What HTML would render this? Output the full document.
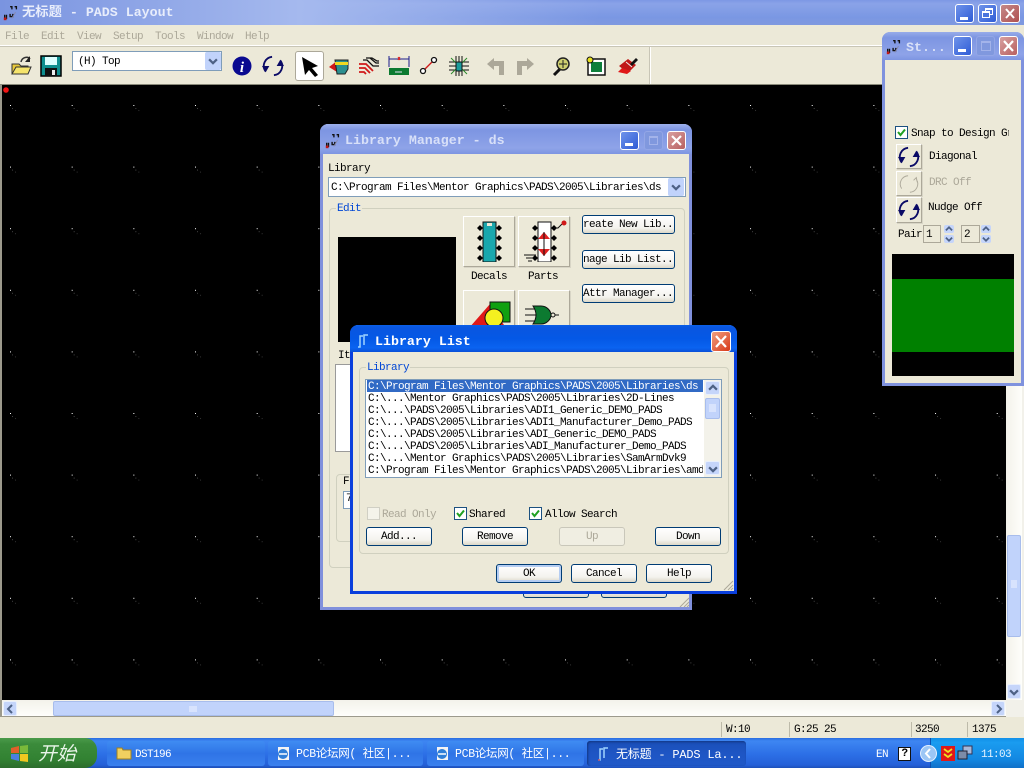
<!DOCTYPE html>
<html lang="zh"><head><meta charset="utf-8"><title>无标题 - PADS Layout</title>
<style>
html,body{margin:0;padding:0;width:1024px;height:768px;overflow:hidden;background:#ece9d8}
body{position:relative;font-family:"Liberation Mono","Noto Sans CJK SC",monospace;font-size:11px;letter-spacing:-.6px;color:#000}
div,svg,span.a{position:absolute;box-sizing:border-box}
.t{position:absolute;white-space:pre;line-height:12px;height:12px;margin-top:1px}
.h{margin-top:0}
.g{color:#aca899}
.blue{color:#0046d5}
.btn{position:absolute;height:19px;background:linear-gradient(#fff,#f4f3ee 70%,#dcd8c8);border:1px solid #003c74;border-radius:3px;text-align:center;line-height:19px;white-space:pre;overflow:hidden}
.dis{border-color:#c9c7ba;background:#f0eee2;color:#aca899}
.tb{border-radius:3px;border:1px solid #fff}
.min{background:linear-gradient(135deg,#6f93ea,#2f5cd6);}
.cls{background:linear-gradient(135deg,#e8907a,#c2452c);}
.group{position:absolute;border:1px solid #d0d0bf;border-radius:4px}
.icbtn{position:absolute;background:#ece9d8;border:1px solid;border-color:#fff #aca899 #aca899 #fff;box-shadow:1px 1px 0 #d8d5c6}
.chk{position:absolute;width:13px;height:13px;background:#fff;border:1px solid #1c5180}
.tsk{position:absolute;top:741px;height:25px;border-radius:3px;color:#fff;line-height:25px;white-space:pre;font-size:11px;background:linear-gradient(#3f8cf3,#2f74e6 50%,#3a80ee)}
</style></head>
<body>
<svg width="0" height="0" style="position:absolute">
<defs>
<symbol id="ref" viewBox="0 0 24 24"><path d="M11 2A10 10 0 0 0 4 18" fill="none" stroke="#0a0a66" stroke-width="2"/><path d="M13 22A10 10 0 0 0 20 6" fill="none" stroke="#0a0a66" stroke-width="2"/><path d="M0 12h8l-4 7zM24 12h-8l4-7z" fill="#0a0a66"/></symbol>
<symbol id="refg" viewBox="0 0 24 24"><path d="M11 3A9 9 0 0 0 4 17M13 21A9 9 0 0 0 20 7M17 8l3-3 1 5" fill="none" stroke="#aca899" stroke-width="1"/></symbol>
<symbol id="ck" viewBox="0 0 11 11"><path d="M2 5l2.500 3L9 2.500" fill="none" stroke="#21a121" stroke-width="2"/></symbol>
<symbol id="mini" viewBox="0 0 20 20"><path d="M9 3h2v3M14 3h2v3M3 12v4h2v-4M9 11v3h3v-3" fill="none" stroke="#111" stroke-width="1.500"/><path d="M2 15h3v3H2z" fill="#c01818"/><path d="M15 9l-4 7" stroke="#88a" stroke-width="1"/></symbol>
<symbol id="up" viewBox="0 0 9 9"><path d="M1 6l3.500-3.500L8 6" fill="none" stroke="#4d6185" stroke-width="2"/></symbol>
<symbol id="dn" viewBox="0 0 9 9"><path d="M1 3l3.500 3.500L8 3" fill="none" stroke="#4d6185" stroke-width="2"/></symbol>
<pattern id="grid" x="10" y="105" width="61.67" height="61.6" patternUnits="userSpaceOnUse"><rect width="1" height="1" fill="#fff"/><rect x="2" y="3" width="1" height="1" fill="#444"/><rect x="5" y="5" width="1" height="1" fill="#333"/></pattern>
</defs>
</svg>

<!-- main title -->
<div style="left:0;top:0;width:1024px;height:25px;background:linear-gradient(#7d98e4,#8aa3e8 15%,#7a97e3 70%,#7f99e0)"></div>
<div style="left:0;top:0;width:600px;height:25px;background:linear-gradient(90deg,#7a94e0,#a5b9ee 50%,#a5b9ee00)"></div>
<svg style="left:2px;top:4px" width="18" height="18"><use href="#mini"/></svg>
<span class="t h" style="left:22px;top:5px;line-height:15px;height:15px;font-size:13.3px;letter-spacing:0;font-weight:bold;color:#e8edfb">无标题 - PADS Layout</span>
<div class="tb min" style="left:955px;top:4px;width:19px;height:19px"><div style="left:4px;top:12px;width:8px;height:3px;background:#fff"></div></div>
<div class="tb min" style="left:978px;top:4px;width:19px;height:19px"><div style="left:6px;top:3px;width:8px;height:7px;border:1px solid #fff;border-top-width:2px"></div><div style="left:3px;top:6px;width:8px;height:7px;border:1px solid #fff;border-top-width:2px;background:#4a74dd"></div></div>
<div class="tb cls" style="left:1000px;top:4px;width:20px;height:19px;background:linear-gradient(135deg,#c58a8a,#b05050)"><svg width="18" height="17"><path d="M5 4l8 9M13 4l-8 9" stroke="#fff" stroke-width="2"/></svg></div>

<!-- menu -->
<div style="left:0;top:25px;width:1024px;height:21px;background:#ece9d8;border-bottom:1px solid #fff"></div>
<span class="t g" style="left:5px;top:30px">File</span>
<span class="t g" style="left:41px;top:30px">Edit</span>
<span class="t g" style="left:77px;top:30px">View</span>
<span class="t g" style="left:113px;top:30px">Setup</span>
<span class="t g" style="left:155px;top:30px">Tools</span>
<span class="t g" style="left:197px;top:30px">Window</span>
<span class="t g" style="left:245px;top:30px">Help</span>
<div style="left:0;top:46px;width:1024px;height:1px;background:#c8c5b6"></div>

<!-- toolbar -->
<svg style="left:10px;top:55px" width="24" height="22"><path d="M2 9h7l2 2h7v8H2z" fill="#e8c93a" stroke="#333"/><path d="M2 19l4-7h15l-3 7z" fill="#f5e46c" stroke="#333"/><path d="M11 7C12 2 18 1 20 4" fill="none" stroke="#333" stroke-width="1.500"/><path d="M20 1v6h-5z" fill="#222"/></svg>
<svg style="left:40px;top:55px" width="22" height="22"><rect x="1" y="1" width="20" height="20" fill="#0f8f8f" stroke="#000" stroke-width="1.500"/><rect x="5" y="2" width="12" height="8" fill="#dff"/><rect x="5" y="13" width="12" height="8" fill="#111"/><rect x="12" y="15" width="3" height="5" fill="#eee"/></svg>
<div style="left:72px;top:51px;width:150px;height:20px;background:#fff;border:1px solid #7f9db9"></div>
<span class="t" style="left:78px;top:55px">(H) Top</span>
<div style="left:205px;top:52px;width:16px;height:18px;background:#c1d3fb;border-radius:2px"><svg style="left:3px;top:4px" width="10" height="10"><use href="#dn"/></svg></div>
<svg style="left:232px;top:56px" width="20" height="20"><circle cx="10" cy="10" r="9.500" fill="#0a0a90"/><text x="10" y="16" text-anchor="middle" fill="#fff" font-family="Liberation Serif" font-style="italic" font-weight="bold" font-size="15" letter-spacing="0">i</text></svg>
<svg style="left:262px;top:55px" width="22" height="22"><use href="#ref"/></svg>
<div style="left:295px;top:51px;width:29px;height:30px;background:#fff;border:1px solid #aca899;border-radius:3px"><svg width="27" height="28"><path d="M6 5l16 9-6 2 6 7-3 2-6-7-4 5z" fill="#000"/></svg></div>
<svg style="left:328px;top:56px" width="22" height="20"><path d="M1 11l8-6v11z" fill="#d01818"/><path d="M7 4h13v9l-3 5H9z" fill="#2b8f8f" stroke="#222"/><path d="M7 6h13v3H7z" fill="#f0d820"/></svg>
<svg style="left:358px;top:56px" width="22" height="20"><path d="M1 8h7l7 7M1 12h6l5 5M1 16h5l2 2" fill="none" stroke="#d01818" stroke-width="1.800"/><path d="M8 2h4l6 5h3M12 2h2l5 3h2M5 4h4l6 6h6" fill="none" stroke="#111" stroke-width="1.300"/></svg>
<svg style="left:387px;top:55px" width="24" height="22"><path d="M2 1v11M22 1v11M2 4h20" stroke="#1a1a8a" fill="none"/><path d="M11 2l2 3M13 2l-2 3" stroke="#e01010"/><rect x="2" y="13" width="20" height="7" fill="#0c7a30"/><path d="M8 17h7" stroke="#dde" /></svg>
<svg style="left:419px;top:56px" width="20" height="20"><path d="M4 15L15 4" stroke="#d01818" stroke-width="1.300"/><circle cx="4" cy="15" r="2.500" fill="#fff" stroke="#111" stroke-width="1.300"/><circle cx="15" cy="4" r="2.500" fill="#fff" stroke="#111" stroke-width="1.300"/></svg>
<svg style="left:448px;top:55px" width="22" height="22"><path d="M8 1v20M11 1v20M14 1v20M1 7h20M1 11h20M1 15h20" stroke="#111"/><path d="M3 3l16 16M19 3L3 19" stroke="#2a8a2a"/><rect x="8" y="7" width="6" height="9" fill="#1b9c9c" stroke="#111"/></svg>
<svg style="left:486px;top:56px" width="20" height="20"><path d="M8 2L1 8l7 6v-4h5v9h5V5H8z" fill="#aca899"/></svg>
<svg style="left:515px;top:56px" width="20" height="20"><path d="M12 2l7 6-7 6v-4H7v9H2V5h10z" fill="#aca899"/></svg>
<svg style="left:551px;top:56px" width="21" height="21"><path d="M9 13l-6 6" stroke="#111" stroke-width="3"/><circle cx="12" cy="8" r="6" fill="#cfd070" stroke="#222" stroke-width="1.500"/><path d="M12 4v8M8 8h8" stroke="#222"/></svg>
<svg style="left:586px;top:56px" width="21" height="20"><rect x="2" y="3" width="17" height="16" fill="#fff" stroke="#111" stroke-width="1.500"/><rect x="5" y="6" width="11" height="10" fill="#0d7f3b"/><circle cx="4" cy="4" r="3" fill="#e8e020" stroke="#111"/></svg>
<svg style="left:617px;top:55px" width="22" height="22"><path d="M2 11l9-7 8 6-8 8z" fill="#c01818"/><path d="M1 17l9 2 4-3-9-3z" fill="#e01818"/><path d="M13 9l6-6 2 2-6 6z" fill="#111"/><path d="M9 7l6 5" stroke="#eee"/></svg>
<div style="left:649px;top:47px;width:2px;height:37px;border-left:1px solid #c8c5b6;border-right:1px solid #fff"></div>

<!-- canvas -->
<div style="left:0;top:84px;width:1024px;height:633px;background:#f2f1ea;border-top:1px solid #8a8a7a"></div>
<div style="left:0;top:85px;width:2px;height:632px;background:#9c9a8c"></div>
<svg style="left:2px;top:85px" width="1004" height="615" viewBox="2 85 1004 615"><rect x="2" y="85" width="1004" height="615" fill="#000"/><rect x="2" y="85" width="1004" height="615" fill="url(#grid)"/><circle cx="6" cy="90" r="2.800" fill="#f01414"/></svg>

<!-- scrollbars -->
<div style="left:1006px;top:85px;width:16px;height:615px;background:linear-gradient(90deg,#f3f2ea,#fefefb)"></div>
<div style="left:1007px;top:535px;width:14px;height:102px;background:#c1d3fb;border:1px solid #a8bdec;border-radius:2px"><svg style="left:2px;top:44px" width="8" height="9"><path d="M1 1h6M1 3h6M1 5h6M1 7h6" stroke="#eef3ff"/></svg></div>
<div style="left:1007px;top:684px;width:14px;height:15px;background:#c5d5fa;border:1px solid #e8effc;border-radius:2px"><svg style="left:1px;top:2px" width="10" height="10"><use href="#dn"/></svg></div>
<div style="left:2px;top:700px;width:1004px;height:17px;background:linear-gradient(#f3f2ea,#fefefb);border-bottom:1px solid #9c9a8c"></div>
<div style="left:3px;top:701px;width:14px;height:15px;background:#c5d5fa;border:1px solid #e8effc;border-radius:2px"><svg style="left:2px;top:2px" width="9" height="10"><path d="M6 1L2 5l4 4" fill="none" stroke="#4d6185" stroke-width="2"/></svg></div>
<div style="left:53px;top:701px;width:281px;height:15px;background:#c1d3fb;border:1px solid #a8bdec;border-radius:2px"><svg style="left:135px;top:3px" width="8" height="8"><path d="M1 1v6M3 1v6M5 1v6M7 1v6" stroke="#eef3ff"/></svg></div>
<div style="left:991px;top:701px;width:14px;height:15px;background:#c5d5fa;border:1px solid #e8effc;border-radius:2px"><svg style="left:3px;top:2px" width="9" height="10"><path d="M2 1l4 4-4 4" fill="none" stroke="#4d6185" stroke-width="2"/></svg></div>

<!-- status -->
<div style="left:0;top:717px;width:1024px;height:21px;background:#ece9d8"></div>
<div style="left:721px;top:722px;width:1px;height:15px;background:#bdbaa9"></div>
<div style="left:789px;top:722px;width:1px;height:15px;background:#bdbaa9"></div>
<div style="left:911px;top:722px;width:1px;height:15px;background:#bdbaa9"></div>
<div style="left:967px;top:722px;width:1px;height:15px;background:#bdbaa9"></div>
<span class="t" style="left:726px;top:723px">W:10</span>
<span class="t" style="left:794px;top:723px">G:25 25</span>
<span class="t" style="left:915px;top:723px">3250</span>
<span class="t" style="left:972px;top:723px">1375</span>

<!-- St window -->
<div style="left:882px;top:32px;width:142px;height:354px;background:#ece9d8;border:3px solid #7f92de;border-top:0;border-radius:8px 8px 0 0"></div>
<div style="left:882px;top:32px;width:142px;height:28px;background:linear-gradient(#98ace9,#7d95e2 20%,#8ea3e8 80%,#7d95e2);border-radius:8px 8px 0 0"></div>
<svg style="left:885px;top:38px" width="18" height="18"><use href="#mini"/></svg>
<span class="t h" style="left:906px;top:40px;height:15px;line-height:15px;font-size:13.3px;letter-spacing:0;font-weight:bold;color:#d8e0f8">St...</span>
<div class="tb min" style="left:953px;top:36px;width:19px;height:20px"><div style="left:4px;top:12px;width:8px;height:3px;background:#fff"></div></div>
<div class="tb" style="left:976px;top:36px;width:19px;height:20px;background:#8098de;border-color:#93a6e6"><div style="left:4px;top:4px;width:10px;height:10px;border:1px solid #a3b3ea;border-top-width:2px"></div></div>
<div class="tb" style="left:999px;top:36px;width:19px;height:20px;background:linear-gradient(135deg,#d8a0a0,#b86060)"><svg width="17" height="18"><path d="M4 4l9 10M13 4L4 14" stroke="#fff" stroke-width="2.200"/></svg></div>
<div class="chk" style="left:895px;top:126px"><svg width="11" height="11"><use href="#ck"/></svg></div>
<div style="left:911px;top:127px;width:98px;height:14px;overflow:hidden"><span class="t" style="left:0;top:0">Snap to Design Grid</span></div>
<div class="icbtn" style="left:896px;top:144px;width:26px;height:25px"><svg style="left:1px;top:1px" width="22" height="22"><use href="#ref"/></svg></div>
<div class="icbtn" style="left:896px;top:171px;width:26px;height:25px"><svg style="left:1px;top:1px" width="22" height="22"><use href="#refg"/></svg></div>
<div class="icbtn" style="left:896px;top:197px;width:26px;height:26px"><svg style="left:1px;top:1px" width="22" height="22"><use href="#ref"/></svg></div>
<span class="t" style="left:929px;top:150px">Diagonal</span>
<span class="t g" style="left:929px;top:176px">DRC Off</span>
<span class="t" style="left:928px;top:201px">Nudge Off</span>
<span class="t" style="left:898px;top:228px">Pair</span>
<div style="left:923px;top:225px;width:18px;height:18px;background:#ece9d8;border:1px solid #aca899;padding-left:2px;line-height:18px">1</div>
<div style="left:961px;top:225px;width:19px;height:18px;background:#ece9d8;border:1px solid #aca899;padding-left:2px;line-height:18px">2</div>
<div style="left:944px;top:225px;width:10px;height:8px;background:#c5d5fa;border-radius:2px"><svg width="10" height="8" viewBox="0 0 9 9"><use href="#up"/></svg></div>
<div style="left:944px;top:235px;width:10px;height:8px;background:#c5d5fa;border-radius:2px"><svg width="10" height="8" viewBox="0 0 9 9"><use href="#dn"/></svg></div>
<div style="left:981px;top:225px;width:10px;height:8px;background:#c5d5fa;border-radius:2px"><svg width="10" height="8" viewBox="0 0 9 9"><use href="#up"/></svg></div>
<div style="left:981px;top:235px;width:10px;height:8px;background:#c5d5fa;border-radius:2px"><svg width="10" height="8" viewBox="0 0 9 9"><use href="#dn"/></svg></div>
<div style="left:892px;top:254px;width:122px;height:122px;background:#000"></div>
<div style="left:892px;top:279px;width:122px;height:73px;background:#008000"></div>

<!-- Library Manager -->
<div style="left:320px;top:124px;width:372px;height:486px;background:#ece9d8;border:3px solid #8090dc;border-top:0;border-radius:8px 8px 0 0"></div>
<div style="left:320px;top:124px;width:372px;height:30px;background:linear-gradient(#9db0ec,#7d95e2 20%,#8ea3e8 80%,#7d95e2);border-radius:8px 8px 0 0"></div>
<svg style="left:324px;top:132px" width="18" height="18"><use href="#mini"/></svg>
<span class="t h" style="left:345px;top:133px;height:15px;line-height:15px;font-size:13.3px;letter-spacing:0;font-weight:bold;color:#d8e0f8">Library Manager - ds</span>
<div class="tb min" style="left:620px;top:131px;width:19px;height:19px"><div style="left:4px;top:11px;width:8px;height:3px;background:#fff"></div></div>
<div class="tb" style="left:644px;top:131px;width:19px;height:19px;background:#8098de;border-color:#93a6e6"><div style="left:4px;top:4px;width:9px;height:9px;border:1px solid #a3b3ea;border-top-width:2px"></div></div>
<div class="tb" style="left:667px;top:131px;width:19px;height:19px;background:linear-gradient(135deg,#d8a0a0,#b86060)"><svg width="17" height="17"><path d="M4 4l9 9M13 4l-9 9" stroke="#fff" stroke-width="2.200"/></svg></div>
<span class="t" style="left:328px;top:162px">Library</span>
<div style="left:328px;top:177px;width:358px;height:20px;background:#fff;border:1px solid #7f9db9"></div>
<span class="t" style="left:331px;top:181px">C:\Program Files\Mentor Graphics\PADS\2005\Libraries\ds</span>
<div style="left:668px;top:178px;width:16px;height:18px;background:#c1d3fb;border-radius:2px"><svg style="left:3px;top:4px" width="10" height="10"><use href="#dn"/></svg></div>
<div class="group" style="left:329px;top:208px;width:356px;height:360px"></div>
<span class="t blue" style="left:336px;top:202px;background:#ece9d8;padding:0 1px">Edit</span>
<div style="left:338px;top:237px;width:118px;height:105px;background:#000"></div>
<div class="icbtn" style="left:463px;top:216px;width:52px;height:51px"><svg style="left:10px;top:3px" width="30" height="42"><rect x="9" y="2" width="13" height="40" fill="#19a7ad" stroke="#111"/><path d="M13 3h5l0 3h-5z" fill="#ece9d8"/><path d="M3 8l3-3 3 3-3 3zM3 18l3-3 3 3-3 3zM3 28l3-3 3 3-3 3zM3 38l3-3 3 3-3 3zM22 8l3-3 3 3-3 3zM22 18l3-3 3 3-3 3zM22 28l3-3 3 3-3 3zM22 38l3-3 3 3-3 3z" fill="#000"/></svg></div>
<div class="icbtn" style="left:518px;top:216px;width:52px;height:51px"><svg style="left:3px;top:3px" width="46" height="42"><rect x="16" y="2" width="13" height="40" fill="#fff" stroke="#111"/><path d="M22 12l6 7H16z" fill="#e02020"/><path d="M22 36l6-7H16z" fill="#e02020"/><path d="M22 12v24" stroke="#111"/><path d="M10 8l3-3 3 3-3 3zM10 18l3-3 3 3-3 3zM10 28l3-3 3 3-3 3zM10 38l3-3 3 3-3 3zM29 8l3-3 3 3-3 3zM29 18l3-3 3 3-3 3zM29 28l3-3 3 3-3 3zM29 38l3-3 3 3-3 3z" fill="#000"/><path d="M2 35h12M4 38h8M6 41h4M32 8h4l4-4" stroke="#111" fill="none"/><circle cx="42" cy="3" r="2.500" fill="#d01818"/></svg></div>
<span class="t" style="left:471px;top:270px">Decals</span>
<span class="t" style="left:528px;top:270px">Parts</span>
<div class="btn" style="left:582px;top:215px;width:93px;text-align:left">reate New Lib..</div>
<div class="btn" style="left:582px;top:250px;width:93px;text-align:left">nage Lib List..</div>
<div class="btn" style="left:582px;top:284px;width:93px;text-align:left">Attr Manager...</div>
<div class="icbtn" style="left:463px;top:290px;width:52px;height:50px"><svg style="left:4px;top:3px" width="44" height="44"><path d="M1 34L22 10l16 24z" fill="#e01818"/><rect x="22" y="8" width="20" height="20" fill="#10a010" stroke="#111"/><circle cx="26" cy="24" r="9" fill="#f4f020" stroke="#111"/></svg></div>
<div class="icbtn" style="left:518px;top:290px;width:52px;height:50px"><svg style="left:4px;top:12px" width="40" height="24"><path d="M2 6h12M2 12h12M2 18h12M28 12h8" stroke="#111" fill="none"/><path d="M10 3h8c6 0 10 5 10 9 0 4-4 9-10 9h-8c4-6 4-12 0-18z" fill="#0c7a30" stroke="#111"/><circle cx="30" cy="12" r="2" fill="#ece9d8" stroke="#111"/></svg></div>
<span class="t" style="left:338px;top:349px">It</span>
<div style="left:335px;top:364px;width:30px;height:88px;background:#fff;border:1px solid #9a9a9a"></div>
<div class="group" style="left:336px;top:474px;width:30px;height:68px"></div>
<span class="t" style="left:343px;top:475px;background:#ece9d8">F</span>
<div style="left:343px;top:491px;width:20px;height:18px;background:#fff;border:1px solid #7f9db9;padding-left:2px;line-height:15px">7</div>
<div class="btn" style="left:523px;top:580px;width:66px;height:18px"></div>
<div class="btn" style="left:601px;top:580px;width:66px;height:18px"></div>
<svg style="left:678px;top:596px" width="12" height="12"><path d="M2 11l9-9M6 11l5-5M9 11l2-2" stroke="#aca899"/></svg>

<!-- Library List -->
<div style="left:350px;top:325px;width:387px;height:269px;background:#ece9d8;border:3px solid #0a3fdc;border-radius:8px 8px 0 0;border-top:0"></div>
<div style="left:350px;top:325px;width:387px;height:27px;background:linear-gradient(#0a5fe8,#0a56e0 10%,#0458e6 50%,#0a63f0 85%,#0a50d8);border-radius:8px 8px 0 0"></div>
<svg style="left:356px;top:333px" width="14" height="16"><path d="M2 14h2V3h3M8 12V2h4" fill="none" stroke="#9fd4ff" stroke-width="1.500"/></svg>
<span class="t h" style="left:375px;top:334px;height:15px;line-height:15px;font-size:13.3px;letter-spacing:0;font-weight:bold;color:#fff">Library List</span>
<div class="tb cls" style="left:711px;top:331px;width:20px;height:21px;background:linear-gradient(135deg,#f0a080,#d83818)"><svg width="18" height="19"><path d="M4 4l10 11M14 4L4 15" stroke="#fff" stroke-width="2.200"/></svg></div>
<div class="group" style="left:359px;top:367px;width:370px;height:187px"></div>
<span class="t blue" style="left:366px;top:361px;background:#ece9d8;padding:0 1px">Library</span>
<div style="left:365px;top:379px;width:357px;height:99px;background:#fff;border:1px solid #7f9db9"></div>
<div style="left:367px;top:380px;width:336px;height:12px;background:#316ac5"></div>
<span class="t" style="left:368px;top:380px;color:#fff">C:\Program Files\Mentor Graphics\PADS\2005\Libraries\ds</span>
<span class="t" style="left:368px;top:392px">C:\...\Mentor Graphics\PADS\2005\Libraries\2D-Lines</span>
<span class="t" style="left:368px;top:404px">C:\...\PADS\2005\Libraries\ADI1_Generic_DEMO_PADS</span>
<span class="t" style="left:368px;top:416px">C:\...\PADS\2005\Libraries\ADI1_Manufacturer_Demo_PADS</span>
<span class="t" style="left:368px;top:428px">C:\...\PADS\2005\Libraries\ADI_Generic_DEMO_PADS</span>
<span class="t" style="left:368px;top:440px">C:\...\PADS\2005\Libraries\ADI_Manufacturer_Demo_PADS</span>
<span class="t" style="left:368px;top:452px">C:\...\Mentor Graphics\PADS\2005\Libraries\SamArmDvk9</span>
<div style="left:368px;top:464px;width:335px;height:13px;overflow:hidden"><span class="t" style="left:0;top:0">C:\Program Files\Mentor Graphics\PADS\2005\Libraries\amd</span></div>
<div style="left:704px;top:380px;width:17px;height:97px;background:#f3f2ea"></div>
<div style="left:705px;top:381px;width:15px;height:14px;background:#c5d5fa;border:1px solid #e8effc;border-radius:2px"><svg style="left:2px;top:1px" width="10" height="10"><use href="#up"/></svg></div>
<div style="left:705px;top:398px;width:15px;height:21px;background:#c1d3fb;border:1px solid #a8bdec;border-radius:2px"><svg style="left:2px;top:5px" width="9" height="9"><path d="M1 1h7M1 3h7M1 5h7M1 7h7" stroke="#eef3ff"/></svg></div>
<div style="left:705px;top:461px;width:15px;height:14px;background:#c5d5fa;border:1px solid #e8effc;border-radius:2px"><svg style="left:2px;top:2px" width="10" height="10"><use href="#dn"/></svg></div>
<div class="chk" style="left:367px;top:507px;border-color:#d0cfc4;background:#f4f3ea"></div>
<span class="t g" style="left:382px;top:508px">Read Only</span>
<div class="chk" style="left:454px;top:507px"><svg width="11" height="11"><use href="#ck"/></svg></div>
<span class="t" style="left:469px;top:508px">Shared</span>
<div class="chk" style="left:529px;top:507px"><svg width="11" height="11"><use href="#ck"/></svg></div>
<span class="t" style="left:545px;top:508px">Allow Search</span>
<div class="btn" style="left:366px;top:527px;width:66px">Add...</div>
<div class="btn" style="left:462px;top:527px;width:66px">Remove</div>
<div class="btn dis" style="left:559px;top:527px;width:66px">Up</div>
<div class="btn" style="left:655px;top:527px;width:66px">Down</div>
<div class="btn" style="left:496px;top:564px;width:66px;box-shadow:inset 0 0 0 2px #b5cdf2">OK</div>
<div class="btn" style="left:571px;top:564px;width:66px">Cancel</div>
<div class="btn" style="left:646px;top:564px;width:66px">Help</div>
<svg style="left:723px;top:580px" width="11" height="11"><path d="M1 10l9-9M5 10l5-5M8 10l2-2" stroke="#aca899"/></svg>

<!-- taskbar -->
<div style="left:0;top:738px;width:1024px;height:30px;background:linear-gradient(#2a6de0,#3e86f2 10%,#2c6fe6 55%,#2560d8 90%,#1d50b8)"></div>
<div style="left:0;top:738px;width:97px;height:30px;border-radius:0 12px 12px 0;background:linear-gradient(#4a9a4a,#3b8b3b 20%,#328232 70%,#2c6c2c)"></div>
<svg style="left:10px;top:744px" width="20" height="19"><path d="M1 4l8-2v7H1z" fill="#e0602a"/><path d="M10 2l8-1v8h-8z" fill="#7ab93a"/><path d="M1 10h8v7l-8-2z" fill="#4a7fe0"/><path d="M10 10h8v8l-8-1z" fill="#f0c820"/></svg>
<span class="t h" style="left:38px;top:742px;height:22px;line-height:22px;font-family:'Noto Sans CJK SC',sans-serif;font-size:19px;font-style:italic;letter-spacing:0;color:#e8f4e8">开始</span>
<div class="tsk" style="left:107px;width:158px"><svg style="left:9px;top:5px" width="16" height="14"><path d="M1 2h5l1 2h8v9H1z" fill="#f0d060" stroke="#a08020"/></svg><span class="t" style="left:28px;top:7px">DST196</span></div>
<div class="tsk" style="left:268px;width:155px"><svg style="left:8px;top:5px" width="15" height="15"><rect x="2" y="1" width="11" height="13" fill="#f4f4f4"/><circle cx="7" cy="8" r="5" fill="#2f7fd8"/><path d="M3 8h8" stroke="#fff" stroke-width="1.500"/></svg><span class="t" style="left:28px;top:7px;font-size:11.500px;letter-spacing:-.3px">PCB论坛网( 社区|...</span></div>
<div class="tsk" style="left:427px;width:157px"><svg style="left:8px;top:5px" width="15" height="15"><rect x="2" y="1" width="11" height="13" fill="#f4f4f4"/><circle cx="7" cy="8" r="5" fill="#2f7fd8"/><path d="M3 8h8" stroke="#fff" stroke-width="1.500"/></svg><span class="t" style="left:28px;top:7px;font-size:11.500px;letter-spacing:-.3px">PCB论坛网( 社区|...</span></div>
<div class="tsk" style="left:587px;width:159px;background:linear-gradient(#1a4fb8,#1e55c4 50%,#2059c8);box-shadow:inset 1px 1px 2px #12357f"><svg style="left:9px;top:5px" width="15" height="16"><path d="M2 14h2V3h3M8 12V2h4" fill="none" stroke="#9fd4ff" stroke-width="1.500"/><path d="M2 14h2" stroke="#e02020"/></svg><span class="t" style="left:29px;top:7px;font-size:12px;letter-spacing:-.2px">无标题 - PADS La...</span></div>
<div style="left:930px;top:738px;width:94px;height:30px;background:linear-gradient(#1290e8,#1a9cf0 15%,#1388e2 70%,#1070c8);border-left:1px solid #0b4fb0"></div>
<span class="t" style="left:876px;top:748px;color:#fff">EN</span>
<div style="left:898px;top:747px;width:13px;height:14px;background:#fff;border:1px solid #111;text-align:center;line-height:12px;font-weight:bold">?</div>
<svg style="left:920px;top:745px" width="17" height="17"><circle cx="8.500" cy="8.500" r="8" fill="#9cc6f5" stroke="#e4f0ff"/><path d="M10 4L6 8.500l4 4.500" fill="none" stroke="#fff" stroke-width="2"/></svg>
<svg style="left:941px;top:746px" width="14" height="15"><rect width="14" height="15" fill="#e01818"/><path d="M3 3l4 3 4-3M3 8l4 3 4-3" fill="none" stroke="#f0e020" stroke-width="1.800"/></svg>
<svg style="left:957px;top:745px" width="16" height="16"><rect x="6" y="1" width="9" height="8" fill="#a8b8d8" stroke="#335"/><rect x="1" y="6" width="9" height="8" fill="#7d8ba8" stroke="#223"/></svg>
<span class="t" style="left:981px;top:748px;color:#e8f4ff">11:03</span>
</body></html>
